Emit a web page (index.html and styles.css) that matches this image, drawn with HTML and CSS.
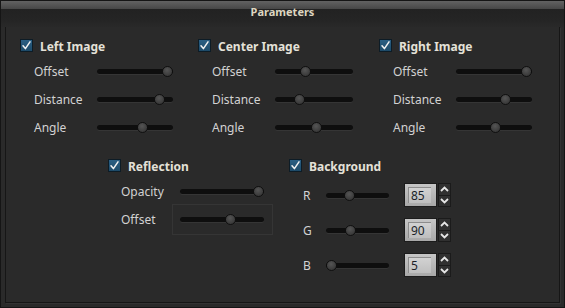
FILE: index.html
```html
<!DOCTYPE html>
<html lang="en">

<head>
    <meta charset="UTF-8">
    <title>Parameters</title>
    <link rel="stylesheet" href="styles.css">
</head>

<body>
    <div class="window">
        <div class="header">Parameters</div>
        <div class="frame">
            <div class="images">
                <div class="group">
                    <div class="check"><span class="box"><svg viewBox="0 0 11 11"><polyline points="2,5.8 4.4,8.6 9,1.8"/></svg></span><span class="name">Left Image</span></div>
                    <div class="row"><span class="label">Offset</span><div class="slider" style="--v:1"><span class="knob"></span></div></div>
                    <div class="row"><span class="label">Distance</span><div class="slider" style="--v:0.87"><span class="knob"></span></div></div>
                    <div class="row"><span class="label">Angle</span><div class="slider" style="--v:0.62"><span class="knob"></span></div></div>
                </div>
                <div class="group">
                    <div class="check"><span class="box"><svg viewBox="0 0 11 11"><polyline points="2,5.8 4.4,8.6 9,1.8"/></svg></span><span class="name">Center Image</span></div>
                    <div class="row"><span class="label">Offset</span><div class="slider wide" style="--v:0.37"><span class="knob"></span></div></div>
                    <div class="row"><span class="label">Distance</span><div class="slider wide" style="--v:0.28"><span class="knob"></span></div></div>
                    <div class="row"><span class="label">Angle</span><div class="slider wide" style="--v:0.54"><span class="knob"></span></div></div>
                </div>
                <div class="group">
                    <div class="check"><span class="box"><svg viewBox="0 0 11 11"><polyline points="2,5.8 4.4,8.6 9,1.8"/></svg></span><span class="name">Right Image</span></div>
                    <div class="row"><span class="label">Offset</span><div class="slider" style="--v:1"><span class="knob"></span></div></div>
                    <div class="row"><span class="label">Distance</span><div class="slider" style="--v:0.67"><span class="knob"></span></div></div>
                    <div class="row"><span class="label">Angle</span><div class="slider" style="--v:0.53"><span class="knob"></span></div></div>
                </div>
            </div>

            <div class="extras">
                <div class="group reflection">
                    <div class="check"><span class="box"><svg viewBox="0 0 11 11"><polyline points="2,5.8 4.4,8.6 9,1.8"/></svg></span><span class="name">Reflection</span></div>
                    <div class="row"><span class="label">Opacity</span><div class="slot"><div class="slider" style="--v:1"><span class="knob"></span></div></div></div>
                    <div class="row"><span class="label">Offset</span><div class="slot focused"><div class="slider" style="--v:0.62"><span class="knob"></span></div></div></div>
                </div>
                <div class="group background">
                    <div class="check"><span class="box"><svg viewBox="0 0 11 11"><polyline points="2,5.8 4.4,8.6 9,1.8"/></svg></span><span class="name">Background</span></div>
                    <div class="row">
                        <span class="label">R</span>
                        <div class="slider" style="--v:0.34"><span class="knob"></span></div>
                        <div class="spinbox">
                            <div class="field"><span>85</span></div>
                            <div class="arrows">
                                <span class="arrow"><svg viewBox="0 0 9 6"><polyline points="1,5 4.5,1.5 8,5"/></svg></span>
                                <span class="arrow"><svg viewBox="0 0 9 6"><polyline points="1,1 4.5,4.5 8,1"/></svg></span>
                            </div>
                        </div>
                    </div>
                    <div class="row">
                        <span class="label">G</span>
                        <div class="slider" style="--v:0.36"><span class="knob"></span></div>
                        <div class="spinbox">
                            <div class="field"><span>90</span></div>
                            <div class="arrows">
                                <span class="arrow"><svg viewBox="0 0 9 6"><polyline points="1,5 4.5,1.5 8,5"/></svg></span>
                                <span class="arrow"><svg viewBox="0 0 9 6"><polyline points="1,1 4.5,4.5 8,1"/></svg></span>
                            </div>
                        </div>
                    </div>
                    <div class="row">
                        <span class="label">B</span>
                        <div class="slider" style="--v:0"><span class="knob"></span></div>
                        <div class="spinbox">
                            <div class="field"><span>5</span></div>
                            <div class="arrows">
                                <span class="arrow"><svg viewBox="0 0 9 6"><polyline points="1,5 4.5,1.5 8,5"/></svg></span>
                                <span class="arrow"><svg viewBox="0 0 9 6"><polyline points="1,1 4.5,4.5 8,1"/></svg></span>
                            </div>
                        </div>
                    </div>
                </div>
            </div>
        </div>
    </div>
</body>

</html>
```

FILE: styles.css
```css
* {
    box-sizing: border-box;
    font-family: "Noto Sans", "DejaVu Sans", sans-serif;
}

body {
    margin: 0;
    background-color: #2a2a2a;
}

.window {
    width: 565px;
    height: 308px;
    border: 1px solid #151515;
    background-color: #2a2a2a;
}

.header {
    height: 26px;
    padding-top: 4px;
    text-align: center;
    font-size: 11px;
    font-weight: bold;
    line-height: 14px;
    color: #ddd6c0;
    background: linear-gradient(to bottom, #626262 0, #474747 8px, #222 8px, #252525 20px, #292929 26px);
}

.frame {
    height: 276px;
    margin: 0 4px;
    padding-top: 12px;
    border: 1px solid #161616;
    border-top: none;
    box-shadow: 1px 1px 0 #333;
}

.images {
    display: grid;
    grid-template-columns: 178px 181px 1fr;
    padding-left: 14px;
}

.extras {
    display: grid;
    grid-template-columns: 181px 1fr;
    margin-top: 18px;
    padding-left: 102px;
}

/* checkbox headers */
.check {
    display: flex;
    align-items: center;
    gap: 7px;
    height: 13px;
    margin-bottom: 5px;
    font-size: 12px;
    font-weight: bold;
    color: #e4e1d8;
    white-space: nowrap;
}

.check .name {
    padding-top: 2px;
}

.box {
    width: 13px;
    height: 13px;
    flex: none;
    border: 1px solid #0d1c26;
    background: linear-gradient(to bottom, #2a5f84, #1d4a68);
}

.box svg {
    display: block;
    width: 11px;
    height: 11px;
    fill: none;
    stroke: #f2f2f2;
    stroke-width: 1.5;
    stroke-linecap: round;
    stroke-linejoin: round;
}

.row {
    display: flex;
    align-items: center;
    height: 28px;
}

.label {
    width: 77px;
    padding-left: 14px;
    font-size: 12px;
    color: #d2d2d2;
}

/* sliders */
.slider {
    position: relative;
    width: 76px;
    height: 11px;
    flex: none;
}

.slider.wide {
    width: 78px;
}

.slider::before {
    content: "";
    position: absolute;
    left: 0;
    right: 0;
    top: 3px;
    height: 5px;
    border-radius: 3px;
    background-color: #0e0e0e;
    box-shadow: 0 1px 0 #353535;
}

.knob {
    position: absolute;
    top: 0;
    left: calc(var(--v) * (100% - 11px));
    width: 11px;
    height: 11px;
    border-radius: 50%;
    border: 1px solid #101010;
    background: radial-gradient(circle at 45% 35%, #555 0, #3a3a3a 70%);
}

.reflection .label {
    width: 64px;
    padding-left: 13px;
}

.slot {
    padding: 9px 8px 9px 7px;
    border: 1px solid transparent;
}

.slot.focused {
    border-color: #353535;
}

.reflection .slider {
    width: 84px;
}

/* background colour rows */
.background .check {
    margin-bottom: 11px;
}

.background .row {
    height: 24px;
    margin-bottom: 11px;
}

.background .label {
    width: 37px;
}

.background .slider {
    width: 63px;
}

.spinbox {
    display: flex;
    margin-left: 15px;
    height: 24px;
}

.field {
    width: 33px;
    padding: 3px 5px 3px 3px;
    border: 1px solid #1c1c1c;
    background: linear-gradient(to bottom, #c6c6c6, #a8a8a8);
}

.field span {
    display: block;
    height: 16px;
    padding-left: 2px;
    font-size: 12px;
    line-height: 16px;
    color: #1a1f28;
    background: linear-gradient(to bottom, #d2d2d2, #bebebe);
    border-top: 1px solid #8c8c8c;
    border-left: 1px solid #8c8c8c;
}

.arrows {
    display: flex;
    flex-direction: column;
    width: 13px;
    margin-left: 1px;
}

.arrow {
    flex: 1;
    display: flex;
    align-items: center;
    justify-content: center;
    background-color: #303030;
    border: 1px solid #1b1b1b;
}

.arrow + .arrow {
    border-top: none;
}

.arrow svg {
    width: 9px;
    height: 6px;
    fill: none;
    stroke: #e6e6e6;
    stroke-width: 1.8;
}
```
